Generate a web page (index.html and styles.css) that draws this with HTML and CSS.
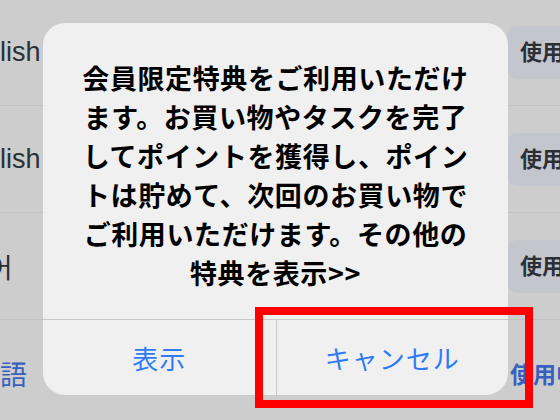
FILE: index.html
```html
<!DOCTYPE html>
<html lang="ja">
<head>
  <meta charset="UTF-8" />
  <meta name="viewport" content="width=device-width, initial-scale=1.0"/>
  <title>言語</title>
  <link rel="stylesheet" href="styles.css">
</head>
<body>
  <div class="screen">
    <ul class="lang-list">
      <li class="lang-row">
        <span class="lang-name">English</span>
        <span class="lang-action">使用する</span>
      </li>
      <li class="lang-row">
        <span class="lang-name">English</span>
        <span class="lang-action">使用する</span>
      </li>
      <li class="lang-row">
        <span class="lang-name ko">한국어</span>
        <span class="lang-action">使用する</span>
      </li>
      <li class="lang-row current">
        <span class="lang-name ja">日本語</span>
        <span class="lang-status">使用中</span>
      </li>
    </ul>

    <div class="alert">
      <p class="alert-message">
        会員限定特典をご利用いただけ<br>
        ます。お買い物やタスクを完了<br>
        してポイントを獲得し、ポイン<br>
        トは貯めて、次回のお買い物で<br>
        ご利用いただけます。その他の<br>
        特典を表示&gt;&gt;
      </p>
      <div class="alert-actions">
        <button>表示</button>
        <button>キャンセル</button>
      </div>
    </div>

    <div class="highlight"></div>
  </div>
</body>
</html>
```

FILE: styles.css
```css
* {
  box-sizing: border-box;
}

body {
  margin: 0;
  padding: 0;
  background: #cdcdcd;
  font-family: "Liberation Sans", "Noto Sans CJK JP", sans-serif;
  overflow: hidden;
}

.screen {
  position: relative;
  width: 560px;
  height: 420px;
  overflow: hidden;
}

.lang-list {
  list-style: none;
  margin: -1px 0 0;
  padding: 0;
}

.lang-row {
  display: flex;
  align-items: center;
  height: 107px;
  border-bottom: 1px solid #c1c1c1;
}

.lang-name {
  flex: 1;
  margin-left: -48px;
  font-size: 27px;
  color: #2c3037;
  white-space: nowrap;
}

.lang-name.ko {
  margin-left: -62px;
  font-family: "Noto Sans CJK KR", sans-serif;
}

.lang-name.ja {
  margin-left: -54px;
  font-family: "Noto Sans CJK JP", sans-serif;
}

.lang-action {
  flex-shrink: 0;
  width: 110px;
  margin-right: -57px;
  padding: 0 0 0 13px;
  height: 53px;
  line-height: 53px;
  background: #c3c6cd;
  border-radius: 10px;
  font-size: 22px;
  font-weight: bold;
  color: #2b2f36;
  white-space: nowrap;
  overflow: hidden;
}

.current .lang-name {
  color: #3a62bd;
}

.lang-status {
  flex-shrink: 0;
  width: 110px;
  margin-right: -60px;
  font-size: 23px;
  font-weight: bold;
  color: #3860bf;
  white-space: nowrap;
}

.alert {
  position: absolute;
  left: 43px;
  top: 23px;
  width: 465px;
  height: 372px;
  background: #f0f0f0;
  border-radius: 22px;
  display: flex;
  flex-direction: column;
  overflow: hidden;
}

.alert-message {
  flex: 1;
  margin: 0;
  padding: 35px 10px 0;
  font-family: "Noto Sans CJK JP", sans-serif;
  font-size: 27px;
  font-weight: bold;
  letter-spacing: 0.6px;
  line-height: 39px;
  text-align: center;
  color: #000;
}

.alert-actions {
  display: grid;
  grid-template-columns: 1fr 1fr;
  height: 76px;
  border-top: 1px solid #c9c9c9;
}

.alert-actions button {
  background: none;
  border: none;
  padding: 0;
  font-family: "Noto Sans CJK JP", sans-serif;
  font-size: 26px;
  letter-spacing: 1px;
  color: #2f7bf5;
  cursor: pointer;
}

.alert-actions button + button {
  border-left: 1px solid #c9c9c9;
}

.highlight {
  position: absolute;
  left: 255px;
  top: 307px;
  width: 278px;
  height: 101px;
  border: 8px solid #ff0000;
}
```
